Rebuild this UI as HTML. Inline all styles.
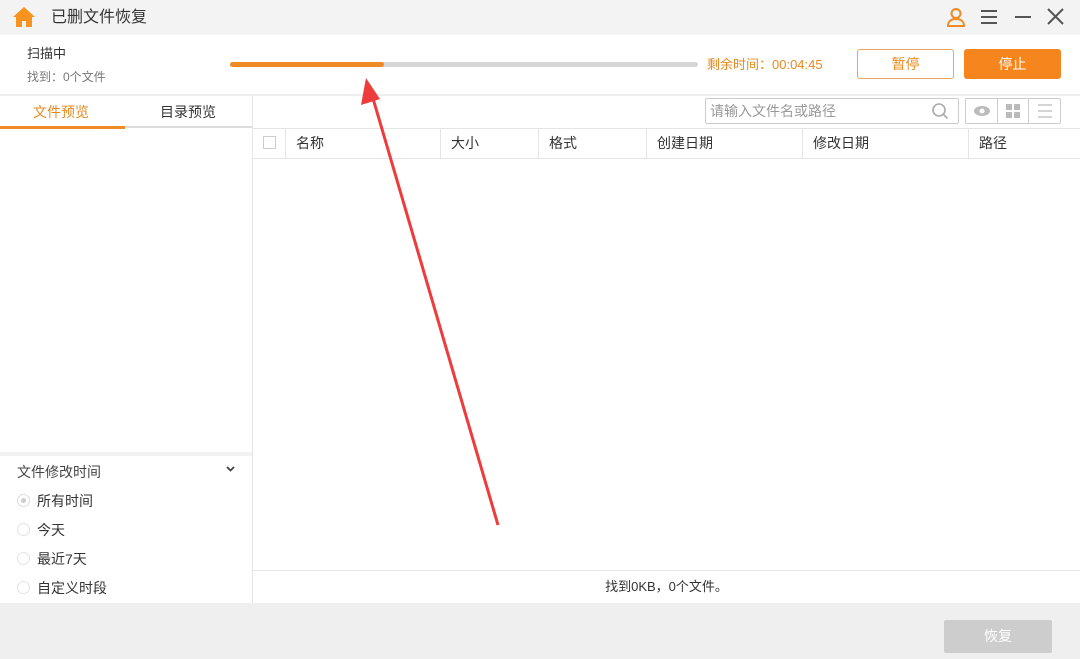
<!DOCTYPE html>
<html><head><meta charset="utf-8"><style>
*{margin:0;padding:0;box-sizing:border-box}
body{width:1080px;height:659px;overflow:hidden;background:#fff;font-family:"Liberation Sans","Noto Sans CJK SC",sans-serif;color:#333;position:relative;font-size:14px;line-height:1.35}
.a{position:absolute}
</style></head><body>
<div class="a" style="left:0;top:0;width:1080px;height:35px;background:#f3f3f3"></div>
<svg class="a" style="left:12px;top:6px" width="24" height="22" viewBox="0 0 24 22"><path d="M12 1L1 11h3v10h6v-6h4v6h6V11h3z" fill="#f7931e"/></svg>
<div class="a" style="left:51px;top:7px;font-size:16px;color:#333">已删文件恢复</div>
<svg class="a" style="left:946px;top:7px" width="20" height="20" viewBox="0 0 20 20" fill="none" stroke="#f08a24" stroke-width="2"><circle cx="10" cy="6.5" r="4.5"/><path d="M2 19c0-5 3.5-7 8-7s8 2 8 7z"/></svg>
<svg class="a" style="left:980px;top:8px" width="18" height="18" stroke="#555" stroke-width="2"><path d="M1 3h16M1 9h16M1 15h16"/></svg>
<svg class="a" style="left:1014px;top:8px" width="18" height="18" stroke="#555" stroke-width="2"><path d="M1 9h16"/></svg>
<svg class="a" style="left:1047px;top:8px" width="17" height="17" stroke="#555" stroke-width="2"><path d="M1 1l15 15M16 1L1 16"/></svg>
<div class="a" style="left:27px;top:45px;font-size:13px;color:#333">扫描中</div>
<div class="a" style="left:27px;top:69px;font-size:12px;color:#777">找到：0个文件</div>
<div class="a" style="left:230px;top:62px;width:468px;height:5px;background:#d6d6d6;border-radius:3px"></div>
<div class="a" style="left:230px;top:62px;width:154px;height:5px;background:#f08a24;border-radius:3px"></div>
<div class="a" style="left:707px;top:56px;font-size:13px;color:#e8891e">剩余时间：00:04:45</div>
<div class="a" style="left:857px;top:49px;width:97px;height:30px;border:1px solid #e9a565;border-radius:3px;color:#e8891e;text-align:center;line-height:28px;font-size:14px">暂停</div>
<div class="a" style="left:964px;top:49px;width:97px;height:30px;background:#f7851e;border-radius:3px;color:#fff;text-align:center;line-height:30px;font-size:14px">停止</div>
<div class="a" style="left:0;top:94px;width:1080px;height:2px;background:#eee"></div>
<div class="a" style="left:252px;top:96px;width:1px;height:507px;background:#e5e5e5"></div>
<div class="a" style="left:33px;top:103px;font-size:14px;color:#e8891e">文件预览</div>
<div class="a" style="left:160px;top:103px;font-size:14px;color:#333">目录预览</div>
<div class="a" style="left:0;top:126px;width:252px;height:2px;background:#ddd"></div>
<div class="a" style="left:0;top:126px;width:125px;height:3px;background:#f08a24"></div>
<div class="a" style="left:0;top:452px;width:252px;height:4px;background:#f2f2f2"></div>
<div class="a" style="left:17px;top:463px;font-size:14px;color:#444">文件修改时间</div>
<svg class="a" style="left:226px;top:466px" width="9" height="7"><path d="M1 1l3.5 3.5L8 1" stroke="#444" stroke-width="1.8" fill="none"/></svg>
<div class="a" style="left:17px;top:494px;width:13px;height:13px;border:1px solid #ddd;border-radius:50%"><div style="margin:3px;width:5px;height:5px;border-radius:50%;background:#ccc"></div></div>
<div class="a" style="left:37px;top:492px;font-size:14px;color:#333">所有时间</div>
<div class="a" style="left:17px;top:523px;width:13px;height:13px;border:1px solid #e2e2e2;border-radius:50%"></div>
<div class="a" style="left:37px;top:521px;font-size:14px;color:#333">今天</div>
<div class="a" style="left:17px;top:552px;width:13px;height:13px;border:1px solid #e2e2e2;border-radius:50%"></div>
<div class="a" style="left:37px;top:550px;font-size:14px;color:#333">最近7天</div>
<div class="a" style="left:17px;top:581px;width:13px;height:13px;border:1px solid #e2e2e2;border-radius:50%"></div>
<div class="a" style="left:37px;top:579px;font-size:14px;color:#333">自定义时段</div>
<div class="a" style="left:705px;top:98px;width:254px;height:26px;border:1px solid #ccc;border-radius:2px;padding-left:4px;line-height:24px;font-size:14px;color:#999">请输入文件名或路径</div>
<svg class="a" style="left:931px;top:102px" width="18" height="18" fill="none" stroke="#aaa" stroke-width="1.6"><circle cx="8" cy="8" r="6"/><path d="M12.5 12.5l4 4"/></svg>
<div class="a" style="left:965px;top:98px;width:96px;height:26px;border:1px solid #ccc;border-radius:2px"></div>
<div class="a" style="left:997px;top:98px;width:1px;height:26px;background:#ccc"></div>
<div class="a" style="left:1028px;top:98px;width:1px;height:26px;background:#ccc"></div>
<svg class="a" style="left:972px;top:104px" width="20" height="14"><ellipse cx="10" cy="7" rx="8" ry="5" fill="#bbb"/><circle cx="10" cy="7" r="2.5" fill="#fff"/></svg>
<svg class="a" style="left:1006px;top:104px" width="14" height="14" fill="#bbb"><rect x="0" y="0" width="6" height="6"/><rect x="8" y="0" width="6" height="6"/><rect x="0" y="8" width="6" height="6"/><rect x="8" y="8" width="6" height="6"/></svg>
<svg class="a" style="left:1037px;top:103px" width="16" height="16" stroke="#bbb" stroke-width="1.3"><path d="M1 2h14M1 8h14M1 14h14"/></svg>
<div class="a" style="left:253px;top:128px;width:827px;height:31px;border-top:1px solid #e5e5e5;border-bottom:1px solid #e5e5e5"></div>
<div class="a" style="left:263px;top:136px;width:13px;height:13px;border:1px solid #ccc"></div>
<div class="a" style="left:285px;top:129px;width:1px;height:29px;background:#e5e5e5"></div>
<div class="a" style="left:440px;top:129px;width:1px;height:29px;background:#e5e5e5"></div>
<div class="a" style="left:538px;top:129px;width:1px;height:29px;background:#e5e5e5"></div>
<div class="a" style="left:646px;top:129px;width:1px;height:29px;background:#e5e5e5"></div>
<div class="a" style="left:802px;top:129px;width:1px;height:29px;background:#e5e5e5"></div>
<div class="a" style="left:968px;top:129px;width:1px;height:29px;background:#e5e5e5"></div>
<div class="a" style="left:296px;top:134px">名称</div>
<div class="a" style="left:451px;top:134px">大小</div>
<div class="a" style="left:549px;top:134px">格式</div>
<div class="a" style="left:657px;top:134px">创建日期</div>
<div class="a" style="left:813px;top:134px">修改日期</div>
<div class="a" style="left:979px;top:134px">路径</div>
<div class="a" style="left:253px;top:570px;width:827px;height:1px;background:#e5e5e5"></div>
<div class="a" style="left:253px;top:578px;width:827px;text-align:center;font-size:13px;color:#333">找到0KB，0个文件。</div>
<div class="a" style="left:0;top:603px;width:1080px;height:56px;background:#efefef"></div>
<div class="a" style="left:944px;top:620px;width:108px;height:33px;background:#cdcdcd;border-radius:2px;color:#fff;text-align:center;line-height:33px">恢复</div>
<svg class="a" style="left:0;top:0" width="1080" height="659"><path d="M498 525L372 95" stroke="#ee3b3b" stroke-width="3"/><path d="M366 78l-5 27 19-6z" fill="#ee3b3b"/></svg>
</body></html>
